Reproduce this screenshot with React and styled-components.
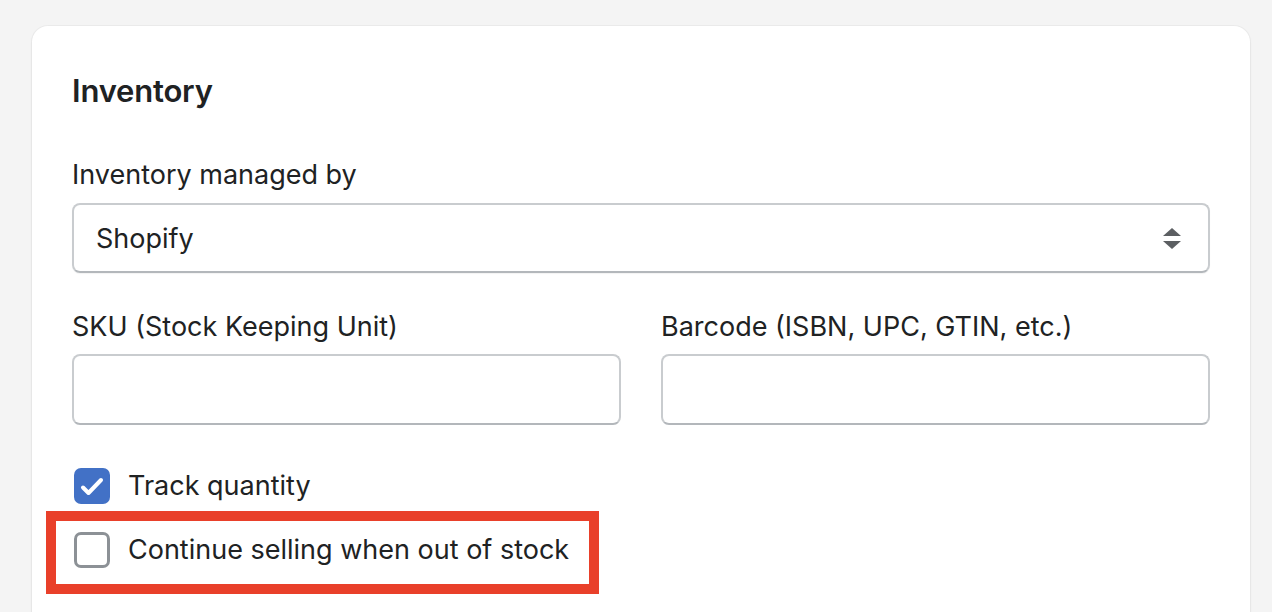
import React, { useState } from "react";
import styled, { createGlobalStyle } from "styled-components";

const GlobalStyle = createGlobalStyle`
  html, body {
    margin: 0;
    padding: 0;
    background: #f4f4f4;
    font-family: Inter, "Noto Sans", sans-serif;
    color: #202223;
  }
`;

const Page = styled.div`
  padding: 26px 22px 0 32px;
  height: 612px;
  box-sizing: border-box;
  overflow: hidden;
`;

const Card = styled.div`
  background: #ffffff;
  border-radius: 16px;
  box-shadow: 0 0 0 1px rgba(0, 0, 0, 0.03), 0 1px 3px rgba(0, 0, 0, 0.06);
  padding: 47px 40px 60px 40px;
  min-height: 640px;
  box-sizing: border-box;
`;

const Title = styled.h2`
  margin: 0 0 50px 0;
  font-size: 31px;
  line-height: 36px;
  font-weight: 600;
  letter-spacing: -0.2px;
`;

const Field = styled.div`
  display: flex;
  flex-direction: column;
  gap: ${({ gap }) => gap || 12}px;
  min-width: 0;
`;

const Label = styled.label`
  font-size: 27px;
  line-height: 32px;
`;

const SelectBox = styled.div`
  height: 70px;
  box-sizing: border-box;
  border: 2px solid #c9cccf;
  border-bottom-color: #b3b7bb;
  border-radius: 8px;
  display: flex;
  align-items: center;
  padding: 0 24px 0 22px;
  font-size: 27px;
  box-shadow: 0 1px 1px rgba(0, 0, 0, 0.05);
`;

const Arrows = styled.svg`
  margin-left: auto;
  margin-right: 2px;
`;

const Input = styled.input`
  height: 71px;
  box-sizing: border-box;
  border: 2px solid #c9cccf;
  border-bottom-color: #b3b7bb;
  border-radius: 8px;
  font-size: 27px;
  padding: 0 24px;
  outline: none;
  width: 100%;
`;

const TwoCols = styled.div`
  display: grid;
  grid-template-columns: 1fr 1fr;
  gap: 40px;
  margin-top: 38px;
`;

const Checks = styled.div`
  margin-top: 43px;
  display: flex;
  flex-direction: column;
  gap: 7px;
`;

const CheckRow = styled.label`
  display: flex;
  align-items: center;
  gap: 18px;
  font-size: 27px;
  line-height: 36px;
  padding-left: 2px;
  cursor: pointer;
`;

const Highlight = styled.div`
  width: fit-content;
  margin-left: -26px;
  border: 10px solid #e9402a;
  padding: 11px 20px 16px 18px;

  ${CheckRow} {
    padding-left: 0;
  }
`;

const Box = styled.span`
  width: 36px;
  height: 36px;
  box-sizing: border-box;
  border-radius: 7px;
  flex-shrink: 0;
  display: flex;
  align-items: center;
  justify-content: center;
  background: ${({ checked }) => (checked ? "#4271c6" : "#ffffff")};
  border: ${({ checked }) => (checked ? "none" : "3px solid #8c9196")};
`;

const Checkbox = ({ checked, onClick }) => (
  <Box checked={checked} onClick={onClick}>
    {checked && (
      <svg width="36" height="36" viewBox="0 0 36 36">
        <path
          d="M9 19.5 L14.5 25 L27 12"
          fill="none"
          stroke="#ffffff"
          strokeWidth="4"
          strokeLinecap="round"
          strokeLinejoin="round"
        />
      </svg>
    )}
  </Box>
);

const App = () => {
  const [track, setTrack] = useState(true);
  const [sell, setSell] = useState(false);

  return (
    <>
      <GlobalStyle />
      <Page>
        <Card>
          <Title>Inventory</Title>
          <Field>
            <Label>Inventory managed by</Label>
            <SelectBox>
              Shopify
              <Arrows width="20" height="26" viewBox="0 0 20 26">
                <path d="M10 3 L19 11 L1 11 Z" fill="#5c5f62" />
                <path d="M10 24 L19 16 L1 16 Z" fill="#5c5f62" />
              </Arrows>
            </SelectBox>
          </Field>
          <TwoCols>
            <Field gap={11}>
              <Label>SKU (Stock Keeping Unit)</Label>
              <Input />
            </Field>
            <Field gap={11}>
              <Label>Barcode (ISBN, UPC, GTIN, etc.)</Label>
              <Input />
            </Field>
          </TwoCols>
          <Checks>
            <CheckRow>
              <Checkbox checked={track} onClick={() => setTrack(!track)} />
              Track quantity
            </CheckRow>
            <Highlight>
              <CheckRow>
                <Checkbox checked={sell} onClick={() => setSell(!sell)} />
                Continue selling when out of stock
              </CheckRow>
            </Highlight>
          </Checks>
        </Card>
      </Page>
    </>
  );
};

export default App;
